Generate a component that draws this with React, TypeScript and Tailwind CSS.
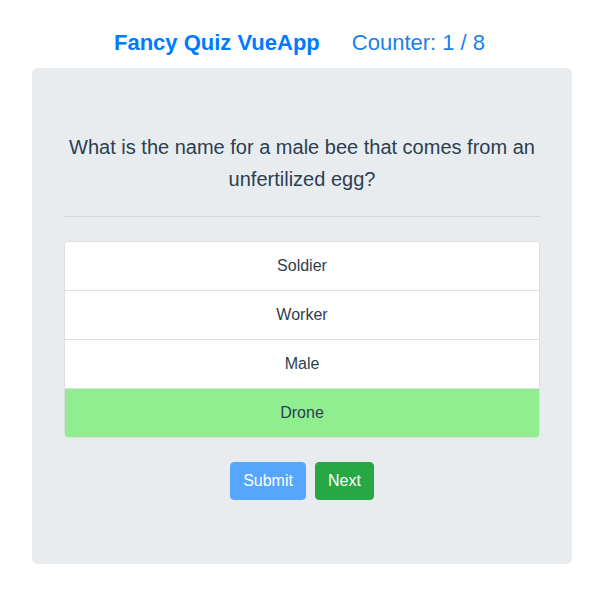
import React from 'react';

const answers = ['Soldier', 'Worker', 'Male', 'Drone'];

const App: React.FC = () => {
  const selected = 3;

  return (
    <div className="min-h-[594px] bg-white text-[#2c3e50] font-['Liberation_Sans',Arial,sans-serif]">
      <div className="flex items-center pt-[28px] pl-[114px] gap-[32px] h-[58px] text-[22px] leading-[30px] text-[#007bff]">
        <span className="font-bold">Fancy Quiz VueApp</span>
        <span className="text-[#1a7fea]">Counter: 1 / 8</span>
      </div>

      <div className="mt-[10px] ml-[32px] w-[540px] bg-[#e9ecef] rounded-[5px] px-[32px] pt-[63px] pb-[64px]">
        <p className="text-[20px] leading-[32px] text-center">
          What is the name for a male bee that comes from an unfertilized egg?
        </p>

        <hr className="mt-[21px] border-0 border-t border-[#d3d6d9]" />

        <ul className="mt-[24px] bg-white border border-[#dfdfdf] rounded-[4px] overflow-hidden divide-y divide-[#dfdfdf]">
          {answers.map((a, i) => (
            <li
              key={a}
              className={`py-[12px] leading-[24px] text-center text-[16px] ${
                i === selected ? 'bg-[#90ee90] border-[#7fd67f]' : 'bg-white'
              }`}
            >
              {a}
            </li>
          ))}
        </ul>

        <div className="mt-[24px] flex justify-center gap-[9px]">
          <button className="px-[12px] py-[6px] leading-[24px] text-[16px] text-white bg-[#55a6fc] border border-[#55a6fc] rounded-[4px]">
            Submit
          </button>
          <button className="px-[12px] py-[6px] leading-[24px] text-[16px] text-white bg-[#28a745] border border-[#28a745] rounded-[4px]">
            Next
          </button>
        </div>
      </div>
    </div>
  );
};

export default App;
